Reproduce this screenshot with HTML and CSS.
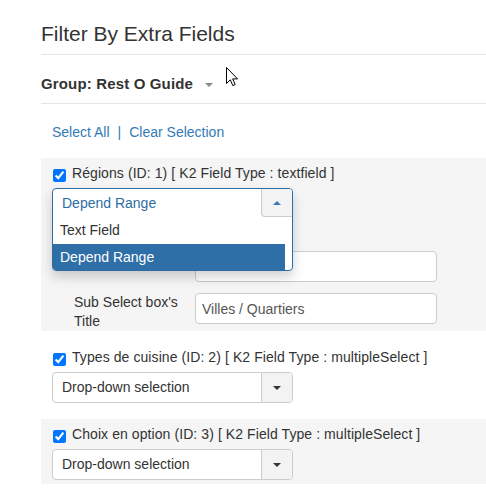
FILE: index.html
```html
<!DOCTYPE html>
<html lang="fr">
<head>
<meta charset="utf-8">
<title>Filter By Extra Fields</title>
<link rel="stylesheet" href="styles.css">
</head>
<body>
<div class="page">
  <h2 class="title">Filter By Extra Fields</h2>
  <div class="group"><span class="group-name">Group: Rest O Guide</span><span class="group-caret"></span></div>
  <div class="links"><a href="#">Select All</a><span class="sep">|</span><a href="#">Clear Selection</a></div>

  <div class="field field-alt field-first">
    <label class="field-check"><input type="checkbox" checked>Régions (ID: 1) [ K2 Field Type : textfield ]</label>
    <div class="combo-wrap">
      <div class="combo-menu">
        <div class="combo-head">
          <span class="combo-value">Depend Range</span>
          <span class="combo-btn combo-btn-open"><span class="caret-up"></span></span>
        </div>
        <ul class="combo-list">
          <li class="combo-opt">Text Field</li>
          <li class="combo-opt combo-opt-active">Depend Range</li>
        </ul>
      </div>
    </div>
    <div class="sub-rows">
      <div class="sub-row"><span class="sub-label"></span><input class="text-input" type="text" value=""></div>
      <div class="sub-row"><span class="sub-label">Sub Select box's Title</span><input class="text-input" type="text" value="Villes / Quartiers"></div>
    </div>
  </div>

  <div class="field field-mid">
    <label class="field-check"><input type="checkbox" checked>Types de cuisine (ID: 2) [ K2 Field Type : multipleSelect ]</label>
    <div class="combo">
      <span class="combo-text">Drop-down selection</span>
      <span class="combo-btn"><span class="caret-down"></span></span>
    </div>
  </div>

  <div class="field field-alt field-last">
    <label class="field-check"><input type="checkbox" checked>Choix en option (ID: 3) [ K2 Field Type : multipleSelect ]</label>
    <div class="combo">
      <span class="combo-text">Drop-down selection</span>
      <span class="combo-btn"><span class="caret-down"></span></span>
    </div>
  </div>
</div>
<svg class="cursor" width="13" height="20" viewBox="0 0 13 20" aria-hidden="true">
  <path d="M0.5 0.5 L0.5 16.5 L4.3 12.8 L6.8 18.6 L9.2 17.6 L6.7 11.9 L11.6 11.9 Z" fill="#fff" stroke="#000" stroke-width="1" stroke-linejoin="miter"/>
</svg>
</body>
</html>
```

FILE: styles.css
```css
* { box-sizing: border-box; }

body {
  margin: 0;
  font-family: "Liberation Sans", Arial, sans-serif;
  font-size: 14px;
  color: #333;
  background: #fff;
}

.page {
  margin-left: 41px;
}

.title {
  margin: 0;
  padding: 23px 0 9px;
  font-size: 21px;
  line-height: 22px;
  font-weight: normal;
  color: #333;
  border-bottom: 1px solid #e5e5e5;
}

.group {
  display: flex;
  align-items: center;
  padding: 20px 0 10px;
  line-height: 18px;
  font-size: 15px;
  font-weight: bold;
  letter-spacing: 0.15px;
  color: #333;
  border-bottom: 1px solid #e5e5e5;
}

.group-caret {
  width: 0;
  height: 0;
  margin-left: 12px;
  margin-top: 1px;
  border-top: 4px solid #8a8a8a;
  border-left: 4px solid transparent;
  border-right: 4px solid transparent;
}

.links {
  padding: 18px 0 16px 11px;
  line-height: 20px;
  color: #337ab7;
}

.links a {
  color: #337ab7;
  text-decoration: none;
}

.sep {
  margin: 0 8px 0 8px;
  color: #337ab7;
}

.field {
  padding-left: 11px;
}

.field-alt { background: #f5f5f5; }

.field-first { padding-top: 5px; padding-bottom: 0; }
.field-mid { padding-top: 16px; padding-bottom: 16px; }
.field-last { padding-top: 5px; padding-bottom: 4px; }

.field-check {
  display: flex;
  align-items: center;
  height: 20px;
  line-height: 20px;
  letter-spacing: 0.08px;
  color: #333;
}

.field-check input {
  width: 13px;
  height: 13px;
  margin: 4px 6px 0 1px;
}

.combo,
.combo-wrap {
  margin-top: 5px;
  width: 241px;
  height: 31px;
}

.combo {
  display: flex;
  border: 1px solid #ccc;
  border-radius: 4px;
  background: #fff;
}

.combo-text {
  flex: 1;
  padding-left: 9px;
  line-height: 29px;
  color: #333;
}

.combo-btn {
  width: 31px;
  display: flex;
  align-items: center;
  justify-content: center;
  background: #f3f3f3;
  border-left: 1px solid #ccc;
  border-radius: 0 3px 3px 0;
}

.caret-down {
  width: 0;
  height: 0;
  border-top: 4px solid #333;
  border-left: 4px solid transparent;
  border-right: 4px solid transparent;
}

.caret-up {
  width: 0;
  height: 0;
  border-bottom: 4px solid #337ab7;
  border-left: 4px solid transparent;
  border-right: 4px solid transparent;
}

.combo-wrap {
  position: relative;
}

.combo-menu {
  position: absolute;
  top: 0;
  left: 0;
  width: 241px;
  z-index: 2;
  background: #fff;
  border: 1px solid #2e6da4;
  border-radius: 4px;
  box-shadow: 0 6px 12px rgba(0, 0, 0, 0.18);
}

.combo-head {
  display: flex;
  height: 28px;
}

.combo-value {
  flex: 1;
  padding-left: 9px;
  line-height: 28px;
  color: #2e6da4;
}

.combo-btn-open {
  width: 31px;
  height: 28px;
  background: #f3f3f3;
  border-left: 1px solid #ccc;
  border-bottom: 1px solid #ccc;
  border-radius: 0 3px 0 4px;
}

.combo-list {
  list-style: none;
  margin: 0 7px 0 0;
  padding: 0;
}

.combo-opt {
  padding-left: 7px;
  height: 27px;
  line-height: 27px;
  color: #333;
}

.combo-opt-active {
  height: 26px;
  line-height: 26px;
  background: #2f6fa7;
  color: #fff;
  border-bottom-left-radius: 3px;
}

.sub-rows {
  margin-top: 32px;
  padding-left: 22px;
  display: flex;
  flex-direction: column;
  gap: 11px;
}

.sub-row {
  display: flex;
  align-items: flex-start;
}

.sub-label {
  width: 121px;
  padding-right: 6px;
  line-height: 19px;
  color: #333;
}

.text-input {
  width: 242px;
  height: 31px;
  margin: 0;
  padding: 0 6px;
  border: 1px solid #ccc;
  border-radius: 4px;
  font-family: "Liberation Sans", Arial, sans-serif;
  font-size: 14px;
  color: #555;
  background: #fff;
}

.cursor {
  position: absolute;
  left: 226px;
  top: 67px;
}
```
